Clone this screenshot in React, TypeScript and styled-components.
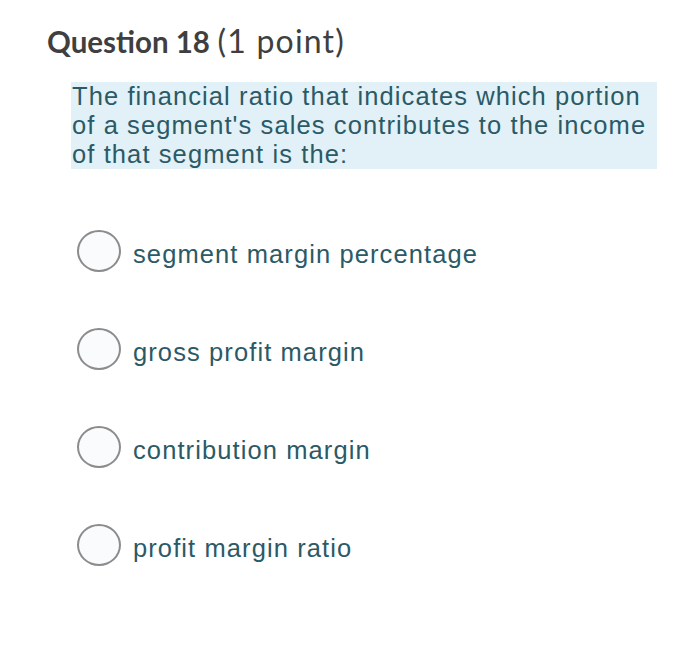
import React from 'react';
import styled, { createGlobalStyle } from 'styled-components';

const GlobalStyle = createGlobalStyle`
  body {
    margin: 0;
    background: #ffffff;
  }
`;

const promptLines = [
  'The financial ratio that indicates which portion',
  "of a segment's sales contributes to the income",
  'of that segment is the:',
];

const options = [
  'segment margin percentage',
  'gross profit margin',
  'contribution margin',
  'profit margin ratio',
];

function App() {
  return (
    <>
      <GlobalStyle />
      <Page>
        <Heading>
          <strong>Question 18</strong> <Points>(1 point)</Points>
        </Heading>
        <Prompt>
          {promptLines.map((line) => (
            <PromptLine key={line}>{line}</PromptLine>
          ))}
        </Prompt>
        <OptionList>
          {options.map((label) => (
            <Option key={label}>
              <Radio type='radio' name='q18' />
              <OptionText>{label}</OptionText>
            </Option>
          ))}
        </OptionList>
      </Page>
    </>
  );
}

export default App;

const Page = styled.div`
  width: 700px;
  height: 653px;
  padding: 22px 0 0 47px;
  box-sizing: border-box;
`;

const Heading = styled.h2`
  margin: 0;
  font-family: Lato, sans-serif;
  font-size: 29.5px;
  font-weight: 400;
  color: #3f3f3f;
  line-height: 38px;

  strong {
    font-weight: 700;
  }
`;

const Points = styled.span`
  font-size: 32px;
  letter-spacing: 1.2px;
`;

const Prompt = styled.div`
  margin: 21px 0 0 24px;
  width: 586px;
  box-sizing: border-box;
  padding: 0 0 0 1px;
  background: #e1f1f7;
  font-family: 'Liberation Sans', Arial, sans-serif;
  font-size: 25.5px;
  letter-spacing: 1.1px;
  line-height: 29px;
  color: #2b5a66;
`;

const PromptLine = styled.div`
  white-space: nowrap;
`;

const OptionList = styled.div`
  display: flex;
  flex-direction: column;
  gap: 56px;
  margin: 61px 0 0 30px;
`;

const Option = styled.label`
  display: flex;
  align-items: flex-start;
  gap: 12px;
  height: 42px;
`;

const Radio = styled.input`
  appearance: none;
  margin: 0;
  width: 44px;
  height: 42px;
  border-radius: 50%;
  border: 2px solid #8c8c8c;
  background: #fafbfd;
  box-sizing: border-box;
`;

const OptionText = styled.span`
  margin-top: 9px;
  font-family: 'Liberation Sans', Arial, sans-serif;
  font-size: 25.5px;
  line-height: 30px;
  letter-spacing: 1.1px;
  color: #2b5a66;
`;
